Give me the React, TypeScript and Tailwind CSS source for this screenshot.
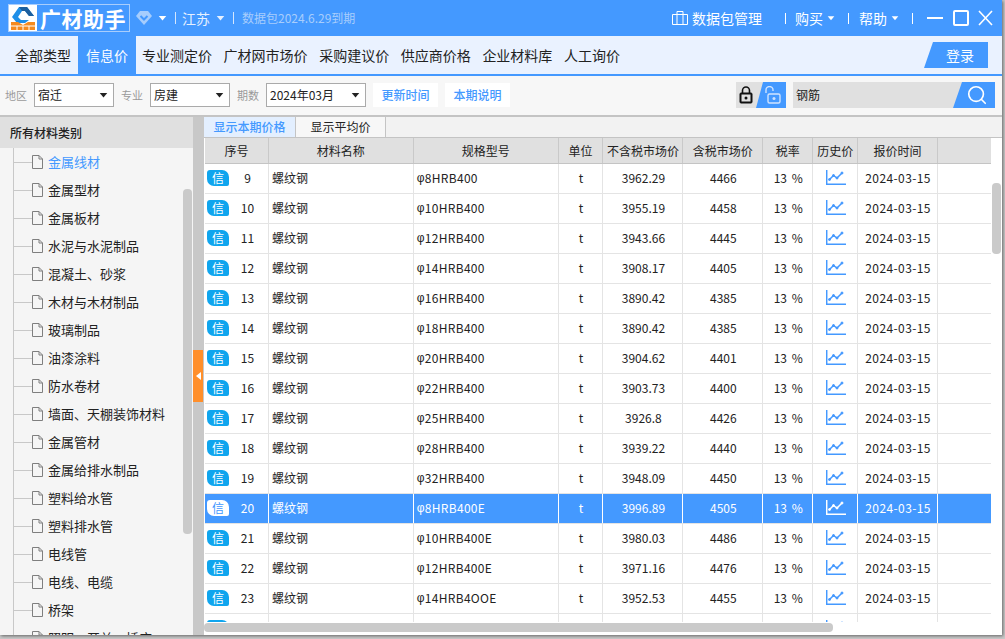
import React from 'react'
import { Search } from 'lucide-react'

const cats = ['金属线材', '金属型材', '金属板材', '水泥与水泥制品', '混凝土、砂浆', '木材与木材制品', '玻璃制品', '油漆涂料', '防水卷材', '墙面、天棚装饰材料', '金属管材', '金属给排水制品', '塑料给水管', '塑料排水管', '电线管', '电线、电缆', '桥架', '照明、开关、插座']

const navs = ['专业测定价', '广材网市场价', '采购建议价', '供应商价格', '企业材料库', '人工询价']

const rows = [
    [9, '8HRB400', '3962.29', 4466],
    [10, '10HRB400', '3955.19', 4458],
    [11, '12HRB400', '3943.66', 4445],
    [12, '14HRB400', '3908.17', 4405],
    [13, '16HRB400', '3890.42', 4385],
    [14, '18HRB400', '3890.42', 4385],
    [15, '20HRB400', '3904.62', 4401],
    [16, '22HRB400', '3903.73', 4400],
    [17, '25HRB400', '3926.8', 4426],
    [18, '28HRB400', '3939.22', 4440],
    [19, '32HRB400', '3948.09', 4450],
    [20, '8HRB400E', '3996.89', 4505],
    [21, '10HRB400E', '3980.03', 4486],
    [22, '12HRB400E', '3971.16', 4476],
    [23, '14HRB4OOE', '3952.53', 4455],
    [24, '16HRB400E', '3900.60', 4440],
] as const

const cols = ['w-[64px]', 'w-[145px]', 'w-[145px]', 'w-[45px]', 'w-[80px]', 'w-[80px]', 'w-[50px]', 'w-[45px]', 'w-[80px]', 'w-[53px]']

const Caret: React.FC<{ className?: string }> = ({ className }) => (
    <svg width="12" height="7" viewBox="0 0 12 7" className={className}>
        <path d="M1 0h10L6 6z" fill="currentColor" />
    </svg>
)

const Trend: React.FC<{ color: string }> = ({ color }) => (
    <svg width="20" height="15" viewBox="0 0 20 15" fill="none" stroke={color}>
        <path d="M.7 0v14.200H20" strokeWidth="1.500" />
        <path d="M3.500 9.500l4-4 3.500 2.500 5-5" strokeWidth="1.500" />
        <circle cx="3.500" cy="9.500" r="1" fill={color} />
        <circle cx="7.500" cy="5.500" r="1" fill={color} />
        <circle cx="11" cy="8" r="1" fill={color} />
        <circle cx="16" cy="3" r="1" fill={color} />
    </svg>
)

const Doc = () => (
    <svg width="11" height="14" viewBox="0 0 11 14" fill="none" stroke="#7f7f7f" className="shrink-0">
        <path d="M.5.5h6.500l3.500 3.500v9.500h-10zM7 .5v3.500h3.500" />
    </svg>
)

const Select: React.FC<{ value: string; width: string }> = ({ value, width }) => (
    <div className={`${width} h-[24px] flex items-center justify-between pl-[3px] pr-[5px] bg-white border border-[#aaaaaa] text-[12px] text-[#222222]`}>
        <span>{value}</span>
        <Caret className="w-[9px] text-[#222222]" />
    </div>
)

const Tag: React.FC<{ active?: boolean }> = ({ active }) => (
    <span className={`w-[22px] h-[16px] flex items-center justify-center text-[12px] rounded-tl-[3px] rounded-tr-[7px] rounded-br-[2px] rounded-bl-[7px] ${active ? 'bg-white text-[#3f97ff]' : 'bg-[#0fa5ee] text-white'}`}>信</span>
)

export default function App() {
    return (
        <div className="w-[1005px] h-[639px] overflow-hidden bg-[#c9c9c9] font-['Noto_Sans_CJK_SC','Liberation_Sans',sans-serif]">
            <div className="w-[1002px] h-[635px] flex flex-col bg-white shadow-[1px_1px_3px_rgba(0,0,0,0.5)]">
                {/* title bar */}
                <div className="h-[36px] shrink-0 flex items-center bg-[#4499ff] text-white">
                    <div className="ml-[8px] flex h-[28px] w-[122px] border border-[#a8cdfc]">
                        <div className="w-[28px] bg-white flex items-center justify-center">
                            <svg width="26" height="26" viewBox="0 0 26 26">
                                <path d="M2 12L9 2h8l7 9h-5l-4-5h-3l-4 6 3 3h8l-4 3H7z" fill="#1f8fe8" />
                                <path d="M9 2h8l7 9h-5l-4-5h-3z" fill="#1d5f9e" />
                                <path d="M1 17h7l5 3 5-3h7v8H1z" fill="#f58a1f" />
                                <path d="M1 21h24M7 21v4M13 21v4M19 21v4" stroke="#fff" strokeWidth="1" />
                            </svg>
                        </div>
                        <span className="flex-1 text-center text-[21px] leading-[26px] font-bold tracking-[0.5px] whitespace-nowrap">广材助手</span>
                    </div>
                    <svg width="16" height="16" viewBox="0 0 16 16" className="ml-[6px]">
                        <path d="M4 1h8l4 5-8 9-8-9z" fill="#a6cdfd" />
                        <path d="M4.500 6l3.500 3.500L11.500 6" stroke="#4499ff" strokeWidth="2" fill="none" />
                    </svg>
                    <Caret className="ml-[6px] w-[9px] text-white" />
                    <span className="ml-[8px] w-px h-[12px] bg-[#d5e6fd]" />
                    <span className="ml-[6px] text-[14px] text-[#e6f0ff]">江苏</span>
                    <Caret className="ml-[6px] w-[9px] text-[#e6f0ff]" />
                    <span className="ml-[8px] w-px h-[12px] bg-[#d5e6fd]" />
                    <span className="ml-[8px] text-[12px] text-[#a8cdfc]">数据包2024.6.29到期</span>
                    <svg width="16" height="14" viewBox="0 0 16 14" fill="none" stroke="#fff" className="ml-auto">
                        <path d="M.5 3.500h15v10H.5zM5 3.500V.5h6v3M5 3.500v10M11 3.500v10" />
                    </svg>
                    <span className="ml-[4px] text-[14px]">数据包管理</span>
                    <span className="ml-[23px] w-px h-[11px] bg-white" />
                    <span className="ml-[9px] text-[14px]">购买</span>
                    <Caret className="ml-[4px] w-[8px]" />
                    <span className="ml-[13px] w-px h-[11px] bg-white" />
                    <span className="ml-[10px] text-[14px]">帮助</span>
                    <Caret className="ml-[4px] w-[8px]" />
                    <span className="ml-[13px] w-px h-[11px] bg-white" />
                    <svg width="66" height="16" viewBox="0 0 66 16" fill="none" stroke="#fff" strokeWidth="2" className="ml-[14px] mr-[9px]">
                        <path d="M0 8h16" />
                        <rect x="27" y="1" width="14" height="14" rx="1" />
                        <path d="M52 1l13 14M65 1L52 15" strokeWidth="1.600" />
                    </svg>
                </div>
                {/* nav tabs */}
                <div className="h-[40px] shrink-0 flex bg-[#eaf2ff] border-b-[2px] border-[#4499ff] text-[14px] text-[#222222]">
                    <div className="w-[78px] flex items-center pl-[15px]">全部类型</div>
                    <div className="w-[58px] flex items-center justify-center bg-[#4499ff] text-white">信息价</div>
                    <div className="flex items-center gap-[11.6px] ml-[6px]">
                        {navs.map((n) => <span key={n}>{n}</span>)}
                    </div>
                    <div className="ml-auto mr-[14px] mt-[6px] w-[64px] h-[26px] flex items-center justify-center pl-[8px] text-white bg-[#4499ff] [clip-path:polygon(9px_0,100%_0,100%_100%,0_100%)]">登录</div>
                </div>
                {/* filter bar */}
                <div className="h-[40px] shrink-0 flex items-center bg-[#f7f7f7] border-b border-[#c4c4c4] text-[11px] pb-[1px]">
                    <span className="ml-[5px] text-[#9a9a9a]">地区</span>
                    <div className="ml-[7px]"><Select value="宿迁" width="w-[80px]" /></div>
                    <span className="ml-[7px] text-[#9a9a9a]">专业</span>
                    <div className="ml-[7px]"><Select value="房建" width="w-[80px]" /></div>
                    <span className="ml-[7px] text-[#9a9a9a]">期数</span>
                    <div className="ml-[7px]"><Select value="2024年03月" width="w-[100px]" /></div>
                    <span className="ml-[7px] w-[65px] h-[24px] flex items-center justify-center bg-white text-[12px] font-medium text-[#4499ff]">更新时间</span>
                    <span className="ml-[7px] w-[65px] h-[24px] flex items-center justify-center bg-white text-[12px] font-medium text-[#4499ff]">本期说明</span>
                    <div className="ml-auto flex h-[26px] w-[50px] bg-[#e0e0e0]">
                        <svg width="16" height="18" viewBox="0 0 16 18" className="ml-[2px] mt-[4px]" fill="none" stroke="#111">
                            <rect x="2" y="7" width="12" height="10" rx="1" fill="#111" />
                            <rect x="3.500" y="8.500" width="9" height="7" fill="#e0e0e0" stroke="none" />
                            <circle cx="8" cy="12" r="1.500" fill="#111" stroke="none" />
                            <path d="M4.500 7V4.500a3.500 3.500 0 0 1 7 0V7" strokeWidth="1.600" />
                        </svg>
                        <div className="ml-[2px] flex-1 bg-[#4499ff] [clip-path:polygon(7px_0,100%_0,100%_100%,0_100%)] flex items-center justify-center pl-[4px]">
                            <svg width="16" height="18" viewBox="0 0 16 18" fill="none" stroke="#cfe3ff">
                                <rect x="3" y="8" width="12" height="9" rx="1.500" strokeWidth="1.400" />
                                <circle cx="9" cy="12.500" r="1.500" fill="#cfe3ff" stroke="none" />
                                <path d="M1 7V4a3.500 3.500 0 0 1 7 0v1" strokeWidth="1.400" />
                            </svg>
                        </div>
                    </div>
                    <div className="ml-[7px] mr-[7px] flex h-[26px] w-[202px] bg-[#e0e0e0] text-[12px] text-[#222222]">
                        <span className="flex-1 pl-[3px] leading-[26px]">钢筋</span>
                        <div className="w-[42px] bg-[#4499ff] [clip-path:polygon(9px_0,100%_0,100%_100%,0_100%)] flex items-center justify-center pl-[5px]">
                            <Search size={22} color="#ffffff" strokeWidth={1.8} />
                        </div>
                    </div>
                </div>
                {/* main */}
                <div className="flex-1 min-h-0 flex border-t border-[#c4c4c4]">
                    {/* sidebar */}
                    <div className="w-[193px] shrink-0 flex flex-col bg-[#f5f5f5]">
                        <div className="h-[31px] shrink-0 pl-[10px] flex items-center bg-[#e0e0e0] text-[12px] font-medium text-[#222222]">所有材料类别</div>
                        <div className="relative flex-1 min-h-0 overflow-hidden">
                            <div className="absolute left-[13px] top-0 bottom-0 w-px bg-[#c8c8c8]" />
                            {cats.map((c, i) => (
                                <div key={c} className={`h-[28px] flex items-center pl-[14px] text-[13px] whitespace-nowrap ${i === 0 ? 'text-[#4499ff]' : 'text-[#222222]'}`}>
                                    <span className="w-[18px] h-px bg-[#c8c8c8] shrink-0" />
                                    <Doc />
                                    <span className="ml-[5px]">{c}</span>
                                </div>
                            ))}
                            <div className="absolute right-[1px] top-[41px] w-[9px] h-[345px] rounded-[4px] bg-[#cacaca]" />
                        </div>
                    </div>
                    {/* splitter */}
                    <div className="w-[11px] shrink-0 flex flex-col bg-[#c8c8c8]">
                        <div className="mt-[233px] h-[52px] w-[10px] bg-[#ff8f2b] flex items-center justify-center">
                            <svg width="5" height="8" viewBox="0 0 5 8"><path d="M5 0v8L0 4z" fill="#ffffff" /></svg>
                        </div>
                    </div>
                    {/* table */}
                    <div className="relative flex-1 min-w-0 flex flex-col bg-white pl-px">
                        <div className="-ml-px h-[21px] shrink-0 flex bg-[#f2f2f2] border-b border-[#c4c4c4] text-[12px]">
                            <span className="w-[91px] flex items-center justify-center font-medium bg-[#e3efff] text-[#4499ff]">显示本期价格</span>
                            <span className="w-[91px] flex items-center justify-center bg-[#f7f7f7] text-[#222222] border-x border-[#c4c4c4]">显示平均价</span>
                        </div>
                        <div className="flex-1 min-h-0 overflow-hidden">
                            <div className="h-[26px] flex w-[786px] bg-[#e0e0e0] border-b border-[#c4c4c4] text-[12px] text-[#222222]">
                                {['序号', '材料名称', '规格型号', '单位', '不含税市场价', '含税市场价', '税率', '历史价', '报价时间', ''].map((h, i) => (
                                    <div key={i} className={`${cols[i]} flex items-center justify-center whitespace-nowrap border-r border-[#c9c9c9] last:border-r-0`}>{h}</div>
                                ))}
                            </div>
                            {rows.map(([no, spec, price, taxed]) => {
                                const active = no === 20
                                const line = active ? 'border-white' : 'border-[#e4e4e4]'
                                return (
                                    <div key={no} className={`h-[30px] w-[786px] flex items-center text-[12px] border-b ${active ? 'bg-[#4499ff] text-white border-[#e4e4e4]' : 'text-[#222222] border-[#e4e4e4]'}`}>
                                        <div className={`w-[64px] h-full flex items-center pl-[2px] pb-[2px] border-r ${line}`}>
                                            <Tag active={active} />
                                            <span className="flex-1 text-center pr-[2px]">{no}</span>
                                        </div>
                                        <div className={`w-[145px] h-full flex items-center pl-[3px] pb-[2px] border-r ${line}`}>螺纹钢</div>
                                        <div className={`w-[145px] h-full flex items-center pl-[3px] pb-[2px] border-r tracking-[0.3px] ${line}`}>
                                            <span className="font-['Liberation_Sans']">φ</span>{spec}
                                        </div>
                                        <div className={`w-[45px] h-full flex items-center justify-center pl-px pb-[2px] border-r ${line}`}>t</div>
                                        <div className={`w-[80px] h-full flex items-center justify-center pl-px pb-[2px] border-r ${line}`}>{price}</div>
                                        <div className={`w-[80px] h-full flex items-center justify-center pl-px pb-[2px] border-r ${line}`}>{taxed}</div>
                                        <div className={`w-[50px] h-full flex items-center justify-center pl-px pb-[2px] border-r [word-spacing:2px] ${line}`}>13 %</div>
                                        <div className={`w-[45px] h-full flex items-center justify-center pl-px pb-[2px] border-r ${line}`}><Trend color={active ? '#ffffff' : '#4499ff'} /></div>
                                        <div className={`w-[80px] h-full flex items-center justify-center pl-px pb-[2px] border-r tracking-[0.4px] ${line}`}>2024-03-15</div>
                                        <div className="w-[53px] h-full" />
                                    </div>
                                )
                            })}
                        </div>
                        <div className="absolute left-0 right-0 bottom-0 h-[13px] bg-white" />
                        <div className="absolute right-[1px] top-[66px] w-[9px] h-[71px] rounded-[4px] bg-[#cacaca]" />
                        <div className="absolute left-0 bottom-[3px] w-[629px] h-[9px] rounded-[4px] bg-[#cacaca]" />
                    </div>
                </div>
            </div>
        </div>
    )
}
